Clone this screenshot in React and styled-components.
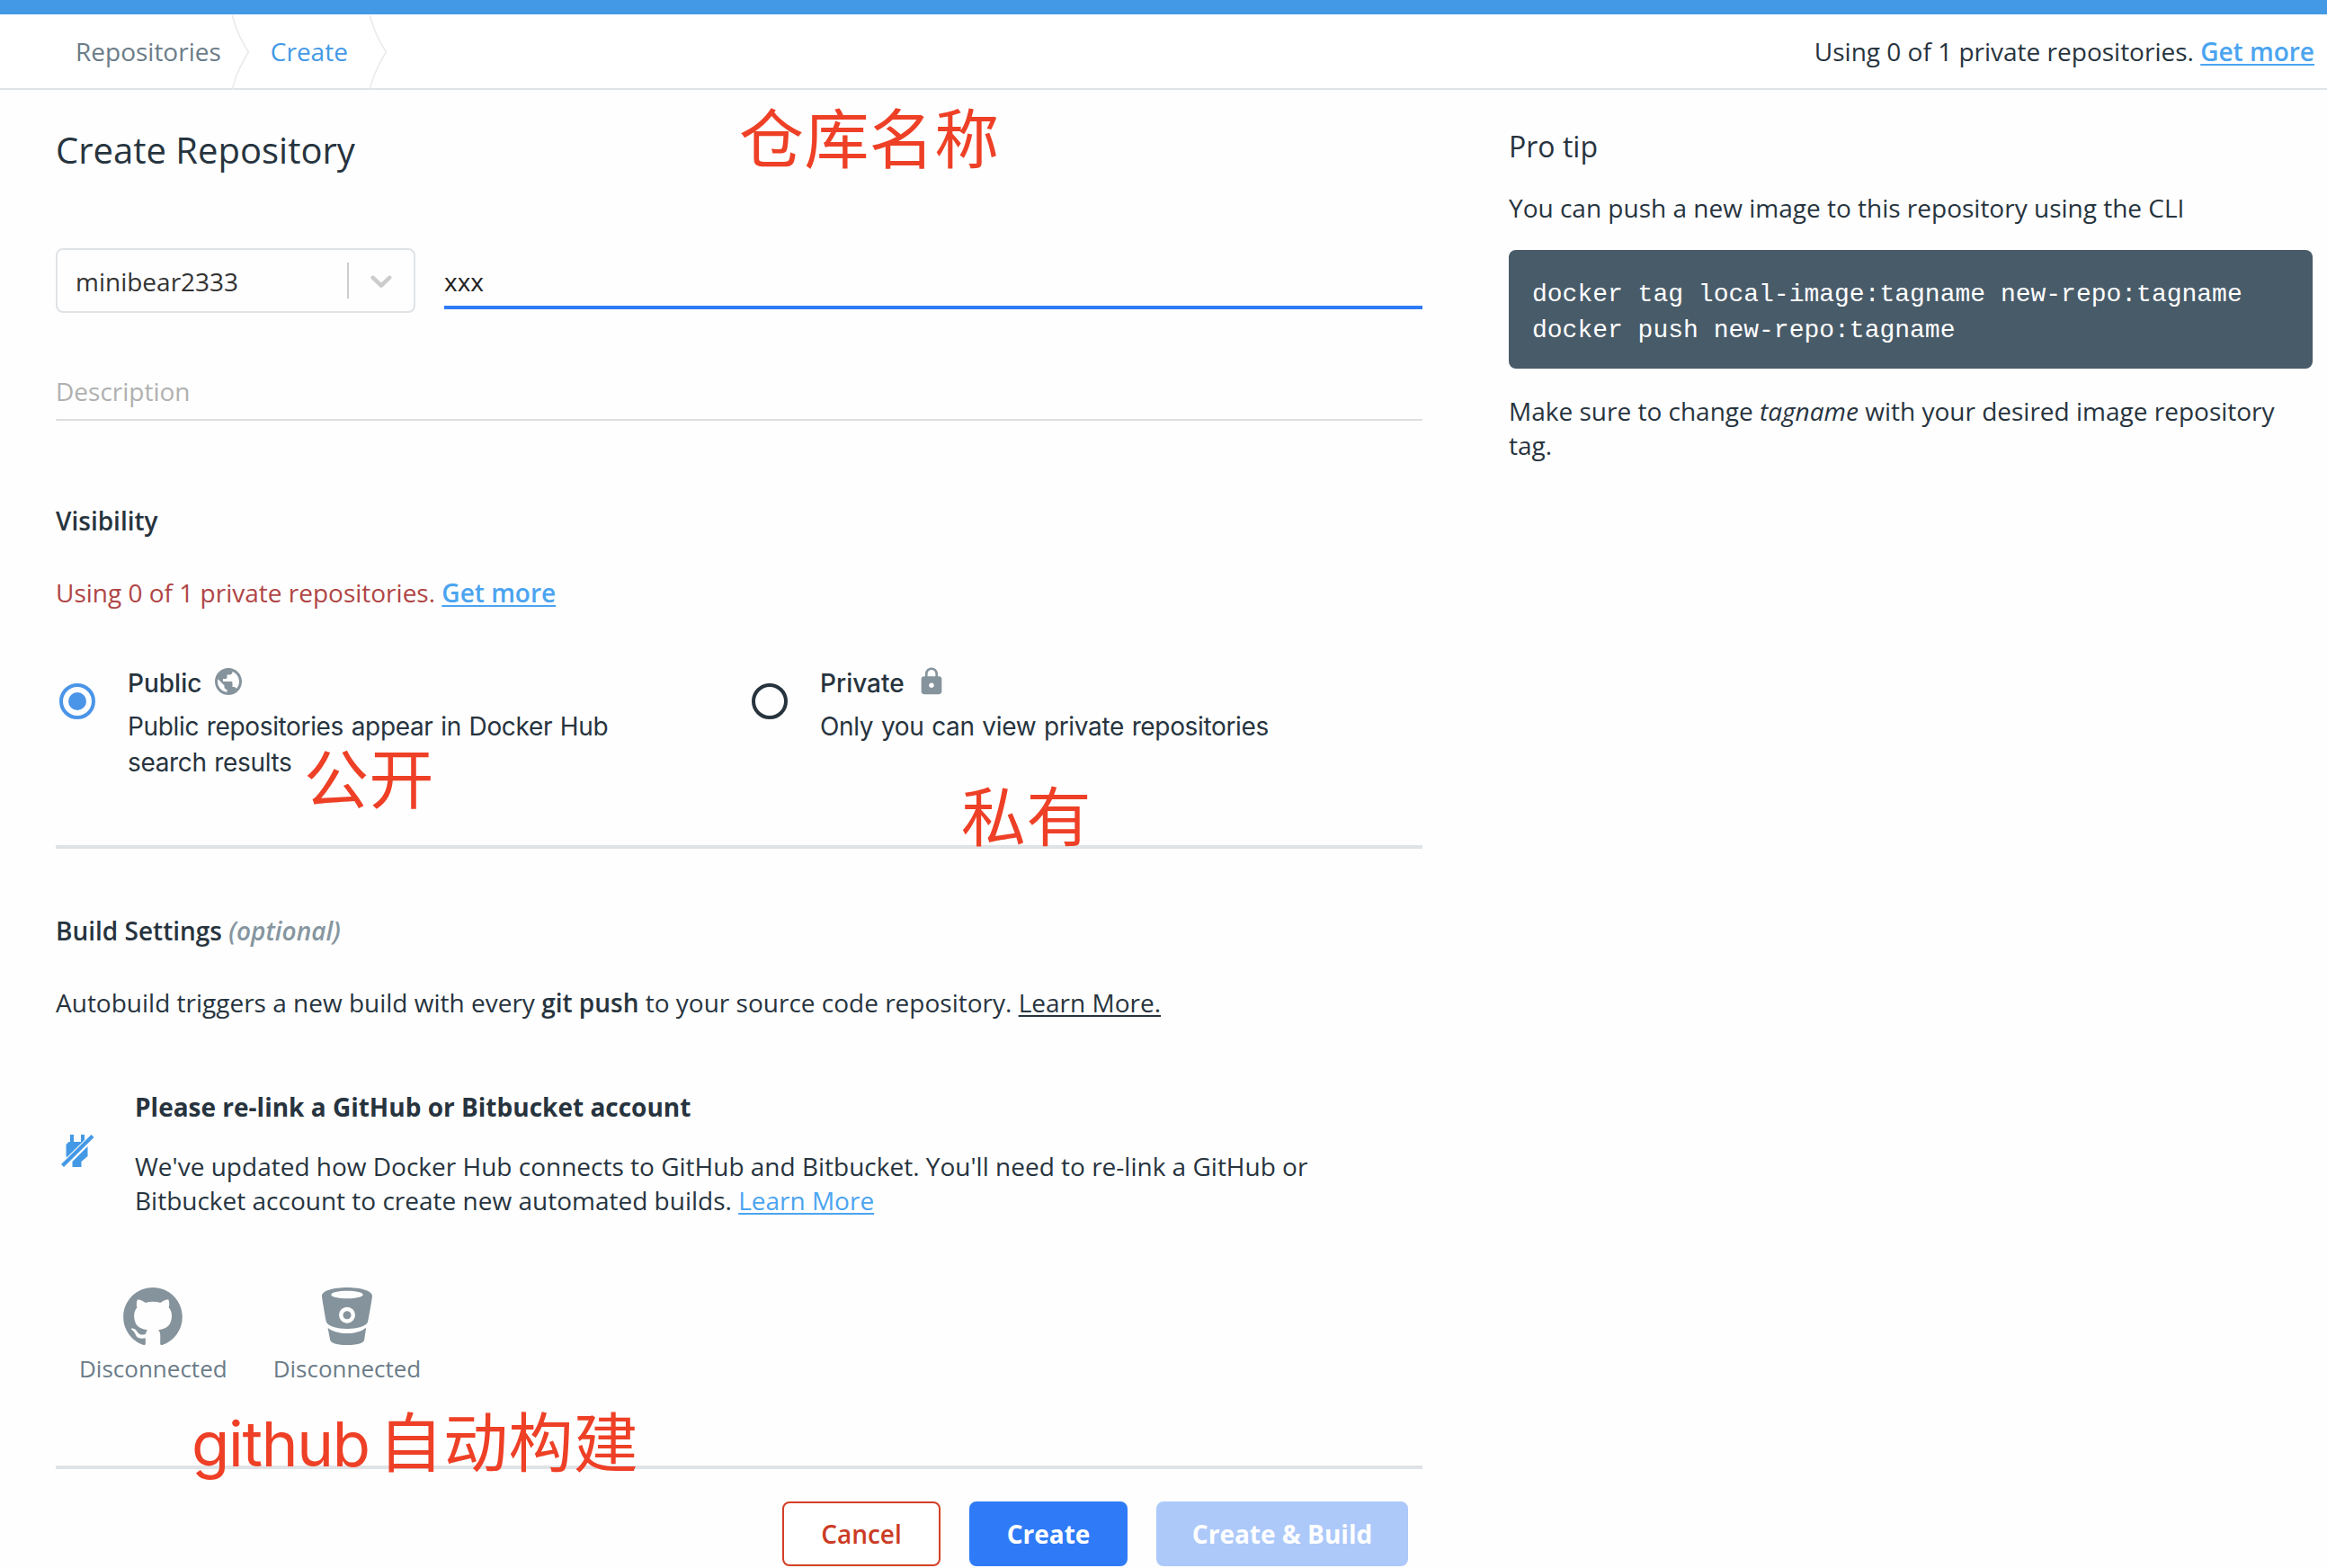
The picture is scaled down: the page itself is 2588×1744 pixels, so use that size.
import React from "react";
import styled, { createGlobalStyle, css } from "styled-components";
import { MdPublic, MdLock } from "react-icons/md";

const GlobalStyle = createGlobalStyle`
  * { box-sizing: border-box; }
  body {
    margin: 0;
    background: #fefefe;
    color: #27343e;
    font: 400 28px/38px "Open Sans", "Noto Sans", sans-serif;
  }
  h1, h2, h3, p, pre { margin: 0; }
`;

const Page = styled.div`
  position: relative;
  width: 2588px;
  height: 1744px;
  overflow: hidden;
`;

const TopBar = styled.div`
  height: 16px;
  background: #4499e6;
`;

const Header = styled.header`
  display: flex;
  align-items: center;
  justify-content: space-between;
  height: 84px;
  padding: 0 14px 0 84px;
  border-bottom: 2px solid #dfe3e6;
  background: #fff;
`;

const Breadcrumbs = styled.nav`
  display: flex;
  align-items: center;
`;

const Crumb = styled.span`
  display: flex;
  align-items: center;
  gap: ${(p) => (p.$active ? 24 : 12)}px;
  margin-right: 23px;
  color: ${(p) => (p.$active ? "#4499e6" : "#6b7c88")};
`;

const CrumbArrow = styled.svg`
  width: 20px;
  height: 84px;
  margin-bottom: -2px;
`;

const BlueLink = styled.a`
  color: #4ba4f0;
  font-weight: ${(p) => (p.$strong ? 600 : 400)};
  text-decoration: underline;
  text-decoration-thickness: 2px;
  text-underline-offset: 3px;
`;

const DarkLink = styled(BlueLink)`
  color: inherit;
`;

const Content = styled.main`
  display: flex;
  align-items: flex-start;
  padding-left: 62px;
`;

const Form = styled.section`
  display: flex;
  flex-direction: column;
  width: 1520px;
  padding-top: 40px;
`;

const Title = styled.h1`
  font-size: 40px;
  font-weight: 400;
  line-height: 54px;
`;

const NameRow = styled.div`
  display: flex;
  align-items: flex-start;
  gap: 32px;
  margin-top: 82px;
`;

const Select = styled.div`
  display: flex;
  align-items: center;
  width: 400px;
  height: 72px;
  padding-left: 20px;
  border: 2px solid #dfe3e6;
  border-radius: 8px;
  color: #333;
`;

const SelectValue = styled.span`
  flex: 1;
  padding-top: 2px;
`;

const SelectArrow = styled.div`
  display: flex;
  align-items: center;
  padding: 0 16px;
  border-left: 2px solid #ccc;
`;

const SelectIcon = styled.svg`
  width: 40px;
  height: 40px;
  fill: #ccc;
`;

const TextField = styled.div`
  padding-bottom: ${(p) => (p.$focused ? 8 : 12)}px;
  ${(p) =>
    p.$focused
      ? css`
          flex: 1;
          margin-top: 18px;
          border-bottom: 4px solid #2f7bf7;
          color: #222;
        `
      : css`
          margin-top: 68px;
          border-bottom: 2px solid #dedede;
          color: #b0b0b0;
        `}
`;

const Heading = styled.h2`
  margin-top: ${(p) => p.$top}px;
  font-size: 28px;
  font-weight: 600;
  line-height: 38px;
`;

const Optional = styled.em`
  color: #8696a0;
`;

const Copy = styled.p`
  margin-top: ${(p) => p.$top || 0}px;
  color: ${(p) => (p.$warn ? "#b04545" : "inherit")};
`;

const Strong = styled.strong`
  font-weight: 600;
`;

const Options = styled.div`
  display: grid;
  grid-template-columns: 770px 1fr;
  height: 128px;
  margin-top: 62px;
  padding-left: 4px;
`;

const Option = styled.label`
  display: flex;
  align-items: flex-start;
  gap: 36px;
`;

const Radio = styled.span`
  display: flex;
  align-items: center;
  justify-content: center;
  width: 40px;
  height: 40px;
  margin-top: 20px;
  border: 4px solid ${(p) => (p.$checked ? "#4a95e8" : "#27343e")};
  border-radius: 50%;

  &::after {
    content: "";
    width: 20px;
    height: 20px;
    border-radius: 50%;
    background: ${(p) => (p.$checked ? "#4a95e8" : "transparent")};
  }
`;

const OptionText = styled.div`
  width: 560px;
  font-family: Inter, "Liberation Sans", sans-serif;
  line-height: 40px;
`;

const OptionDetail = styled.div`
  letter-spacing: -0.35px;
  word-spacing: 1.2px;
`;

const OptionTitle = styled.div`
  display: flex;
  align-items: center;
  height: 40px;
  margin-bottom: 8px;
  font-weight: 500;

  svg {
    margin: -4px 0 0 ${(p) => p.$iconGap}px;
    color: #85939c;
  }
`;

const Divider = styled.div`
  height: 4px;
  margin-top: ${(p) => p.$top}px;
  background: #dfe3e6;
`;

const Relink = styled.div`
  display: flex;
  align-items: flex-start;
  gap: 44px;
  margin-top: 78px;
  padding-left: 5px;
`;

const PlugIcon = styled.svg`
  width: 39px;
  height: 38px;
  margin-top: 49px;
  fill: #4499e6;
`;

const RelinkBody = styled.div`
  width: 1400px;
`;

const RelinkTitle = styled.h3`
  margin-bottom: 28px;
  font-size: 28px;
  font-weight: 700;
  line-height: 38px;
`;

const Providers = styled.div`
  display: flex;
  gap: 51px;
  margin-top: 78px;
  padding-left: 26px;
`;

const Provider = styled.div`
  display: flex;
  flex-direction: column;
  align-items: center;
  gap: 8px;
  color: #6b7c88;
  font-size: 26px;
  line-height: 36px;

  svg {
    height: 64px;
    fill: #85939c;
    overflow: visible;
  }
`;

const Actions = styled.div`
  display: flex;
  justify-content: flex-end;
  gap: 32px;
  margin-top: 36px;
  padding-right: 16px;
`;

const Button = styled.button`
  width: ${(p) => p.$width}px;
  height: 72px;
  padding: 0;
  border: 2px solid ${(p) => p.$border || p.$fill};
  border-radius: 8px;
  background: ${(p) => p.$fill};
  color: ${(p) => p.$color || "#fff"};
  font: ${(p) => p.$weight || 700} 28px/38px "Open Sans", sans-serif;
`;

const Aside = styled.aside`
  width: 894px;
  margin-left: 96px;
  padding-top: 41px;
`;

const TipTitle = styled.h2`
  font-size: 32px;
  font-weight: 400;
  line-height: 44px;
`;

const Code = styled.pre`
  height: 132px;
  margin: 28px 0;
  padding: 30px 26px 22px;
  border-radius: 8px;
  background: #485b69;
  color: #fff;
  font: 28px/40px "Courier New", "Liberation Mono", monospace;
`;

const Note = styled.div`
  position: absolute;
  left: ${(p) => p.$x}px;
  top: ${(p) => p.$y}px;
  color: #ee4026;
  font: 400 72px/72px "Noto Sans CJK SC", sans-serif;
  letter-spacing: 0.4px;
  white-space: nowrap;
`;

const NoteLatin = styled.span`
  margin-right: 10px;
  font-family: Inter, "Liberation Sans", sans-serif;
  font-size: 69px;
  letter-spacing: -1.3px;
`;

const Arrow = () => (
  <CrumbArrow viewBox="0 0 20 84">
    <path d="M0 84V0L19 42L0 84" fill="#fff" />
    <path d="M0.5 1C4 17 13 34 18.500 42C13 50 4 67 0.500 83" fill="none" stroke="#e8eaec" strokeWidth="1.600" />
  </CrumbArrow>
);

export default function App() {
  return (
    <Page>
      <GlobalStyle />
      <TopBar />
      <Header>
        <Breadcrumbs>
          <Crumb>
            Repositories
            <Arrow />
          </Crumb>
          <Crumb $active>
            Create
            <Arrow />
          </Crumb>
        </Breadcrumbs>
        <span>
          Using 0 of 1 private repositories. <BlueLink $strong>Get more</BlueLink>
        </span>
      </Header>

      <Content>
        <Form>
          <Title>Create Repository</Title>
          <NameRow>
            <Select>
              <SelectValue>minibear2333</SelectValue>
              <SelectArrow>
                <SelectIcon viewBox="0 0 20 20">
                  <path d="M4.516 7.548c0.436-0.446 1.043-0.481 1.576 0l3.908 3.747 3.908-3.747c0.533-0.481 1.141-0.446 1.574 0 0.436 0.445 0.408 1.197 0 1.615-0.406 0.418-4.695 4.502-4.695 4.502-0.217 0.223-0.502 0.335-0.787 0.335s-0.570-0.112-0.789-0.335c0 0-4.287-4.084-4.695-4.502s-0.436-1.170 0-1.615z" />
                </SelectIcon>
              </SelectArrow>
            </Select>
            <TextField $focused>xxx</TextField>
          </NameRow>
          <TextField>Description</TextField>

          <Heading $top={92}>Visibility</Heading>
          <Copy $top={42} $warn>
            Using 0 of 1 private repositories. <BlueLink $strong>Get more</BlueLink>
          </Copy>
          <Options>
            <Option>
              <Radio $checked />
              <OptionText>
                <OptionTitle $iconGap={12}>
                  Public
                  <MdPublic size={36} />
                </OptionTitle>
                <OptionDetail>Public repositories appear in Docker Hub search results</OptionDetail>
              </OptionText>
            </Option>
            <Option>
              <Radio />
              <OptionText>
                <OptionTitle $iconGap={13}>
                  Private
                  <MdLock size={34} />
                </OptionTitle>
                <OptionDetail>Only you can view private repositories</OptionDetail>
              </OptionText>
            </Option>
          </Options>
          <Divider $top={72} />

          <Heading $top={72}>
            Build Settings <Optional>(optional)</Optional>
          </Heading>
          <Copy $top={42}>
            Autobuild triggers a new build with every <Strong>git push</Strong> to your source code
            repository. <DarkLink>Learn More.</DarkLink>
          </Copy>
          <Relink>
            <PlugIcon viewBox="0 0 39 38">
              <path d="M11 1h4v8h8V1h4v6L7 26.500L6.500 24V12L9.500 9H11zM30.500 14v11L23.500 31V37H13.500V31z" />
              <path d="M34.500 1L37.500 4L4 37L1 34z" />
            </PlugIcon>
            <RelinkBody>
              <RelinkTitle>Please re-link a GitHub or Bitbucket account</RelinkTitle>
              <Copy>
                We've updated how Docker Hub connects to GitHub and Bitbucket. You'll need to re-link a
                GitHub or Bitbucket account to create new automated builds.{" "}
                <BlueLink>Learn More</BlueLink>
              </Copy>
            </RelinkBody>
          </Relink>
          <Providers>
            <Provider>
              <svg width="66" viewBox="0 0 16 15.600">
                <path d="M8 0C3.580 0 0 3.580 0 8c0 3.540 2.290 6.530 5.470 7.590.4.070.55-.17.55-.38 0-.19-.01-.82-.01-1.490-2.010.37-2.530-.49-2.690-.94-.09-.23-.48-.94-.82-1.130-.28-.15-.68-.52-.01-.53.63-.01 1.080.58 1.230.82.72 1.210 1.870.87 2.330.66.07-.52.28-.87.51-1.070-1.780-.2-3.640-.89-3.640-3.950 0-.87.31-1.590.82-2.150-.08-.2-.36-1.020.08-2.120 0 0 .67-.21 2.200.82.64-.18 1.320-.27 2-.27.68 0 1.360.09 2 .27 1.530-1.040 2.200-.82 2.200-.82.44 1.100.16 1.920.08 2.120.51.56.82 1.270.82 2.150 0 3.070-1.870 3.750-3.650 3.950.29.25.54.73.54 1.480 0 1.070-.01 1.930-.01 2.200 0 .21.15.46.55.38A8.013 8.013 0 0016 8c0-4.420-3.580-8-8-8z" />
              </svg>
              Disconnected
            </Provider>
            <Provider>
              <svg width="56" viewBox="0 0 56 64">
                <path
                  fillRule="evenodd"
                  d="M28 0C12 0 0 4 0 9.500C0 11 4 35 5 38.500C6.500 43 17 46 28 46S49.500 43 51 38.500C52 35 56 11 56 9.500C56 4 44 0 28 0zM28 3.700C38 3.700 45.700 5.500 45.700 8S38 12.300 28 12.300S10.300 10.500 10.300 8S18 3.700 28 3.700zM28 21.700a9 9 0 1 1 0 18a9 9 0 1 1 0-18zM28 26.200a4.500 4.500 0 1 0 0 9a4.500 4.500 0 1 0 0-9z"
                />
                <path d="M6.800 45C12 49 20 51 28 51S44 49 48.500 45C49.500 45 49 46 47 59C46 62 38 64 28 64S10.500 62 9.300 59C7 47 6.500 45 6.800 45z" />
              </svg>
              Disconnected
            </Provider>
          </Providers>
          <Divider $top={90} />
          <Actions>
            <Button $width={176} $fill="#fff" $border="#d33f27" $color="#cb3b25" $weight={600}>
              Cancel
            </Button>
            <Button $width={176} $fill="#2f7bf7">Create</Button>
            <Button $width={280} $fill="#adc9fa">Create &amp; Build</Button>
          </Actions>
        </Form>

        <Aside>
          <TipTitle>Pro tip</TipTitle>
          <Copy $top={27}>You can push a new image to this repository using the CLI</Copy>
          <Code>{"docker tag local-image:tagname new-repo:tagname\ndocker push new-repo:tagname"}</Code>
          <Copy>
            Make sure to change <em>tagname</em> with your desired image repository tag.
          </Copy>
        </Aside>
      </Content>

      <Note $x={822} $y={114}>仓库名称</Note>
      <Note $x={338} $y={826}>公开</Note>
      <Note $x={1069} $y={868}>私有</Note>
      <Note $x={213} $y={1564}>
        <NoteLatin>github</NoteLatin>自动构建
      </Note>
    </Page>
  );
}
